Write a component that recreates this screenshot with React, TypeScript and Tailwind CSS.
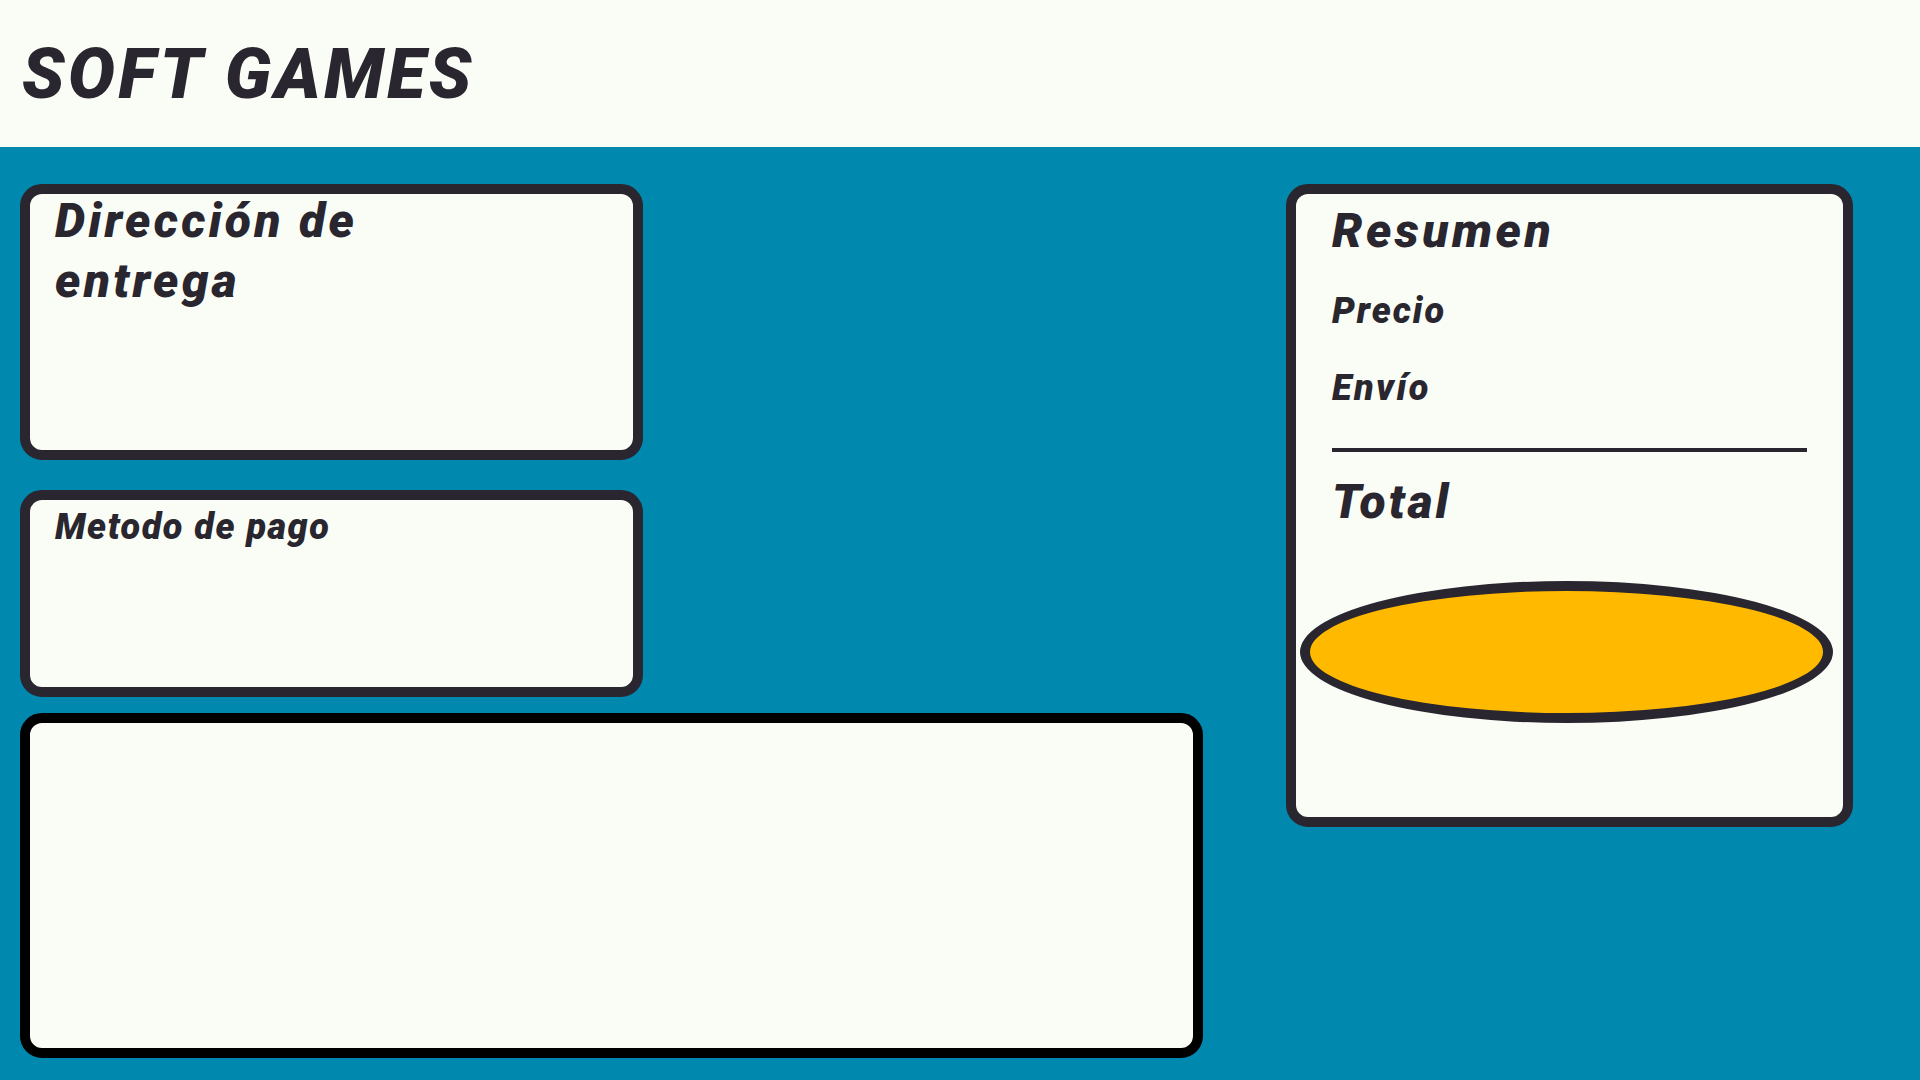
import React from "react";

function Card({
  className,
  children,
}: {
  className: string;
  children?: React.ReactNode;
}) {
  return (
    <div className={`rounded-[22px] border-[10px] bg-[#fafdf6] ${className}`}>
      {children}
    </div>
  );
}

export default function App() {
  return (
    <div className="min-h-screen w-full bg-[#0188af] font-['Roboto',sans-serif] text-[#29262f]">
      <header className="h-[147px] bg-[#fafdf6] pl-[22px] pt-[39px]">
        <h1 className="text-[70px] leading-[70px] font-black italic tracking-[3.5px]">SOFT GAMES</h1>
      </header>

      <main className="flex gap-[83px] pl-[20px] pt-[37px]">
        <div className="flex w-[1183px] flex-col">
          <Card className="h-[276px] w-[623px] border-[#29262f] pl-[25px]">
            <h2 className="-mt-[3px] max-w-[380px] text-[48px] leading-[60px] font-black italic tracking-[3.3px]">
              Dirección de entrega
            </h2>
          </Card>

          <Card className="mt-[30px] h-[207px] w-[623px] border-[#29262f] pl-[25px] pt-[6px]">
            <h3 className="text-[36px] leading-[42px] font-black italic tracking-[1.5px]">Metodo de pago</h3>
          </Card>

          <Card className="mt-[16px] h-[345px] w-[1183px] border-black" />
        </div>

        <Card className="flex h-[643px] w-[567px] flex-col border-[#29262f]">
          <div className="flex flex-col px-[36px] pt-[7px]">
            <h2 className="text-[48px] leading-[60px] font-black italic tracking-[3.5px]">Resumen</h2>
            <p className="mt-[29px] text-[36px] leading-[42px] font-black italic tracking-[2px]">Precio</p>
            <p className="mt-[35px] text-[36px] leading-[42px] font-black italic tracking-[2.4px]">Envío</p>
            <div className="mt-[39px] h-[4px] w-full bg-[#29262f]" />
            <p className="mt-[20px] text-[48px] leading-[60px] font-black italic tracking-[3px]">Total</p>
          </div>
          <button className="ml-[4px] mt-[49px] h-[142px] w-[533px] rounded-[50%] border-[10px] border-[#29262f] bg-[#ffba00]" />
        </Card>
      </main>
    </div>
  );
}
